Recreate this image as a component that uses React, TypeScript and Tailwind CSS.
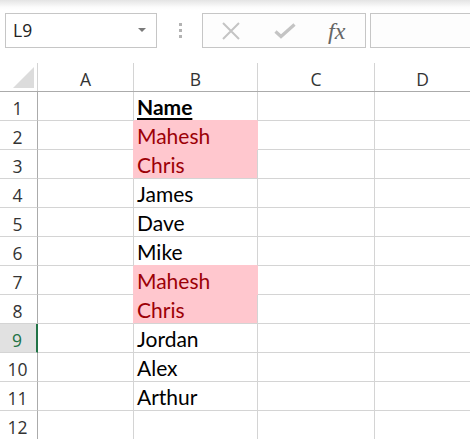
import React from "react";

const rows: { n: number; text: string; fill?: boolean; bold?: boolean }[] = [
  { n: 1, text: "Name", bold: true },
  { n: 2, text: "Mahesh", fill: true },
  { n: 3, text: "Chris", fill: true },
  { n: 4, text: "James" },
  { n: 5, text: "Dave" },
  { n: 6, text: "Mike" },
  { n: 7, text: "Mahesh", fill: true },
  { n: 8, text: "Chris", fill: true },
  { n: 9, text: "Jordan" },
  { n: 10, text: "Alex" },
  { n: 11, text: "Arthur" },
  { n: 12, text: "" },
];

const hdrFont = { fontFamily: '"Open Sans", "DejaVu Sans", sans-serif' };
const cellFont = { fontFamily: 'Lato, "Open Sans", sans-serif' };

export default function App() {
  return (
    <div className="w-[470px] h-[439px] overflow-hidden bg-white relative">
      {/* top bar */}
      <div className="h-[63px] flex items-start pt-[13px] bg-[linear-gradient(to_bottom,#e4e4e4_0px,#fbfbfb_7px,#ffffff_10px)]">
        <div
          className="ml-[5px] w-[152px] h-[35px] shrink-0 border border-[#c6c6c6] bg-white flex items-center justify-between pl-[7px] pr-[10px]"
          style={hdrFont}
        >
          <span className="text-[17.5px] text-[#222] leading-none">L9</span>
          <svg width="8" height="5" viewBox="0 0 8 5">
            <path d="M0 0 L8 0 L4 4 Z" fill="#7a7a7a" />
          </svg>
        </div>
        <div className="w-[45px] h-[35px] shrink-0 flex flex-col items-center justify-center gap-[3px] pl-[2px]">
          <div className="w-[3px] h-[3px] bg-[#b3b3b3]" />
          <div className="w-[3px] h-[3px] bg-[#b3b3b3]" />
          <div className="w-[3px] h-[3px] bg-[#b3b3b3]" />
        </div>
        <div className="w-[164px] h-[35px] shrink-0 border border-[#c6c6c6] bg-[#fdfdfd] flex items-center">
          <svg className="ml-[18px]" width="20" height="20" viewBox="0 0 20 20">
            <path d="M2 2 L18 18 M18 2 L2 18" stroke="#c4c4c4" strokeWidth="2" />
          </svg>
          <svg className="ml-[33px]" width="22" height="16" viewBox="0 0 22 16">
            <path d="M1.5 8.5 L7 13.5 L20.5 1.5" stroke="#c4c4c4" strokeWidth="3.2" fill="none" />
          </svg>
          <span
            className="ml-[32px] text-[#666] italic text-[24px] leading-none"
            style={{ fontFamily: '"Liberation Serif", "DejaVu Serif", serif' }}
          >
            fx
          </span>
        </div>
        <div className="ml-[4px] w-[102px] h-[35px] shrink-0 border border-[#c6c6c6] bg-[#fdfdfd]" />
      </div>

      {/* column header row */}
      <div className="grid grid-cols-[38px_96px_124px_117px_1fr] h-[29px] border-b border-[#ababab]" style={hdrFont}>
        <div className="border-r border-[#d4d4d4] relative">
          <svg className="absolute left-[13px] top-[4px]" width="21" height="21" viewBox="0 0 21 21">
            <path d="M21 0 L21 21 L0 21 Z" fill="#dcdcdc" />
          </svg>
        </div>
        {["A", "B", "C", "D"].map((c, i) => (
          <div
            key={c}
            className={`flex items-end justify-center pb-[3px] text-[17.5px] leading-none text-[#333] ${i < 3 ? "border-r border-[#d4d4d4]" : ""}`}
          >
            {c}
          </div>
        ))}
      </div>

      {/* rows */}
      {rows.map((r, idx) => {
        const next = rows[idx + 1];
        const sel = r.n === 9;
        const bBorder = r.fill
          ? next && next.fill
            ? "border-[#ffc7ce]"
            : "border-[#d4d4d4]"
          : next && next.fill
          ? "border-b-[#ffc7ce] border-r-[#d4d4d4]"
          : "border-[#d4d4d4]";
        return (
          <div key={r.n} className="grid grid-cols-[38px_96px_124px_117px_1fr] h-[29px]">
            <div
              className={`border-b flex items-end justify-center pb-[3px] pr-[2px] text-[17.5px] leading-none ${
                sel
                  ? "bg-[#e1e1e1] text-[#217346] border-r-2 border-r-[#217346] border-b-[#d4d4d4]"
                  : "border-r border-r-[#ababab] border-b-[#d4d4d4] text-[#333]"
              }`}
              style={hdrFont}
            >
              {r.n}
            </div>
            <div
              className={`border-b border-r border-b-[#d4d4d4] ${
                r.fill ? "border-r-[#ffc7ce]" : "border-r-[#d4d4d4]"
              }`}
            />
            <div
              className={`border-b border-r flex items-end pl-[3px] pb-[3px] text-[21px] leading-none ${bBorder} ${
                r.fill ? "bg-[#ffc7ce] text-[#9c0006]" : "text-black"
              } ${r.bold ? "font-bold underline underline-offset-[3px] decoration-[1.5px]" : ""}`}
              style={cellFont}
            >
              {r.text}
            </div>
            <div className="border-b border-r border-[#d4d4d4]" />
            <div className="border-b border-[#d4d4d4]" />
          </div>
        );
      })}
    </div>
  );
}
